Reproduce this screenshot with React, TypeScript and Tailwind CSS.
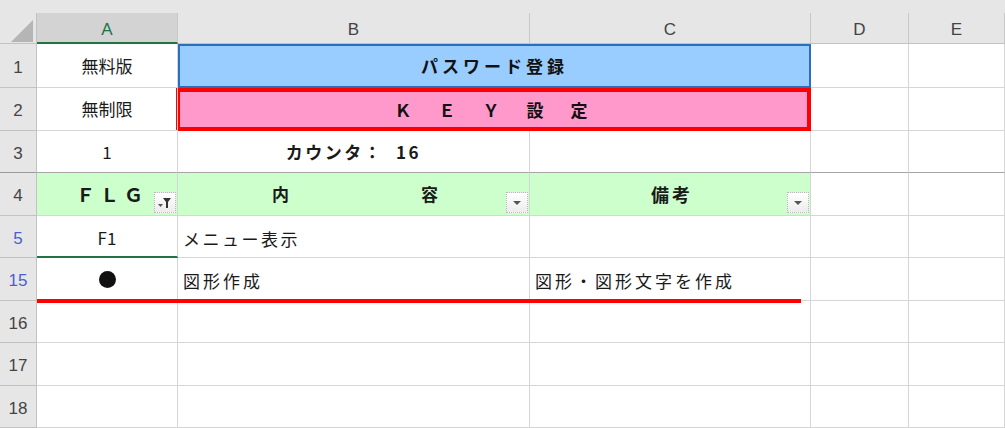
import React from 'react';

const jp = "font-['Noto_Sans_CJK_JP',sans-serif]";
const latin = "font-['Liberation_Sans','Noto_Sans',sans-serif]";

const rowHeights = [44, 43, 42, 43, 42, 43, 42, 43, 42];

// shared cell look: light gridlines on the right and bottom
const Cell = ({ children, className = '' }: { children?: React.ReactNode; className?: string }) => (
  <div className={`relative flex items-center border-r border-b border-[#d6d6d6] text-[17px] text-[#1a1a1a] ${jp} ${className}`}>
    {children}
  </div>
);

const RowHead = ({ n, filtered = false, className = '' }: { n: string; filtered?: boolean; className?: string }) => (
  <div
    className={`flex items-center justify-center pt-1 border-r border-b border-[#c2c2c2] bg-[#e6e6e6] text-[17px] ${latin} ${
      filtered ? 'text-[#4a5fd1]' : 'text-[#444]'
    } ${className}`}
  >
    {n}
  </div>
);

const ColHead = ({ label, active = false }: { label: string; active?: boolean }) => (
  <div
    className={`flex items-center justify-center pt-1 text-[17px] ${latin} border-r border-[#c8c8c8] ${
      active ? 'bg-[#d3d3d3] text-[#217346] border-b-2 border-b-[#217346]' : 'bg-[#e6e6e6] text-[#444] border-b border-b-[#c2c2c2]'
    }`}
  >
    {label}
  </div>
);

// autofilter dropdown button, with a funnel when the column is filtered
const FilterButton = ({ active = false }: { active?: boolean }) => (
  <div className="absolute right-[1px] bottom-[2px] w-[22px] h-[21px] border border-dotted border-[#b8b8b8] bg-gradient-to-b from-white to-[#ececec] flex items-center justify-center">
    {active ? (
      <svg width="14" height="12" viewBox="0 0 14 12">
        <path d="M5 1h8l-3 4v6h-2V5z" fill="#333" />
        <path d="M0 7h5l-2.5 3z" fill="#555" />
      </svg>
    ) : (
      <svg width="10" height="6" viewBox="0 0 10 6">
        <path d="M1 1h8l-4 4z" fill="#555" />
      </svg>
    )}
  </div>
);

export default function App() {
  return (
    <div className="w-[1005px] h-[428px] overflow-hidden bg-white relative">
      <div className="h-[13px] bg-[#e6e6e6]" />
      <div
        className="grid"
        style={{
          gridTemplateColumns: '37px 141px 352px 281px 98px 96px',
          gridTemplateRows: ['31px', ...rowHeights.map((h) => `${h}px`)].join(' '),
        }}
      >
        {/* column headers */}
        <div className="relative bg-[#e6e6e6] border-r border-b border-[#c2c2c2]">
          <svg className="absolute left-[11px] top-[7px]" width="22" height="22" viewBox="0 0 22 22">
            <path d="M22 0v22H0z" fill="#b5b5b5" />
          </svg>
        </div>
        <ColHead label="A" active />
        <ColHead label="B" />
        <ColHead label="C" />
        <ColHead label="D" />
        <ColHead label="E" />

        {/* 1 */}
        <RowHead n="1" />
        <Cell className="justify-center">無料版</Cell>
        <div className={`col-span-2 flex items-center justify-center bg-[#99ccff] border-2 border-[#2a6fbd] font-bold text-[17px] tracking-[4px] text-[#111] ${jp}`}>
          パスワード登録
        </div>
        <Cell />
        <Cell />

        {/* 2 */}
        <RowHead n="2" />
        <Cell className="justify-center">無制限</Cell>
        <div className={`col-span-2 -ml-[2px] flex items-center justify-center bg-[#ff99cc] border-[4px] border-[#ff0000] font-bold text-[17px] tracking-[5px] text-[#111] ${jp}`}>
          Ｋ　Ｅ　Ｙ　設　定
        </div>
        <Cell />
        <Cell />

        {/* 3 — frozen pane edge below */}
        <RowHead n="3" className="border-b-[#9a9a9a]" />
        <Cell className={`justify-center border-b-[#a6a6a6] ${latin}`}>1</Cell>
        <Cell className="justify-center font-bold border-b-[#a6a6a6]">
          <span className="ml-0 tracking-[2.5px]">カウンタ：&nbsp;&nbsp;16</span>
        </Cell>
        <Cell className="border-b-[#a6a6a6]" />
        <Cell className="border-b-[#a6a6a6]" />
        <Cell className="border-b-[#a6a6a6]" />

        {/* 4 — table header */}
        <RowHead n="4" />
        <Cell className="bg-[#ccffcc] font-bold">
          <span className="ml-[39px] tracking-[5px] text-[19px]">ＦＬＧ</span>
          <FilterButton active />
        </Cell>
        <Cell className="bg-[#ccffcc] font-bold">
          <div className="ml-[94px] w-[166px] flex justify-between">
            <span>内</span>
            <span>容</span>
          </div>
          <FilterButton />
        </Cell>
        <Cell className="bg-[#ccffcc] font-bold">
          <span className="ml-[121px] tracking-[3px] text-[18px]">備考</span>
          <FilterButton />
        </Cell>
        <Cell />
        <Cell />

        {/* 5 */}
        <RowHead n="5" filtered />
        <Cell className={`justify-center pt-1 ${latin} text-[16px] border-b-2 border-b-[#217346]`}>F1</Cell>
        <Cell className="pl-[5px] pt-1 tracking-[2.5px]">メニュー表示</Cell>
        <Cell />
        <Cell />
        <Cell />

        {/* 15 */}
        <RowHead n="15" filtered />
        <Cell className="justify-center">
          <span className="w-[17px] h-[17px] rounded-full bg-[#111]" />
        </Cell>
        <Cell className="pl-[5px] pt-1 tracking-[3px]">図形作成</Cell>
        <Cell className="pl-[5px] pt-1 tracking-[3px]">図形・図形文字を作成</Cell>
        <Cell />
        <Cell />

        {['16', '17', '18'].map((n) => (
          <React.Fragment key={n}>
            <RowHead n={n} />
            <Cell />
            <Cell />
            <Cell />
            <Cell />
            <Cell />
          </React.Fragment>
        ))}
      </div>

      {/* red line shape drawn over the sheet */}
      <div className="absolute left-[37px] top-[299px] w-[764px] h-[4px] bg-[#ff0000]" />
    </div>
  );
}
